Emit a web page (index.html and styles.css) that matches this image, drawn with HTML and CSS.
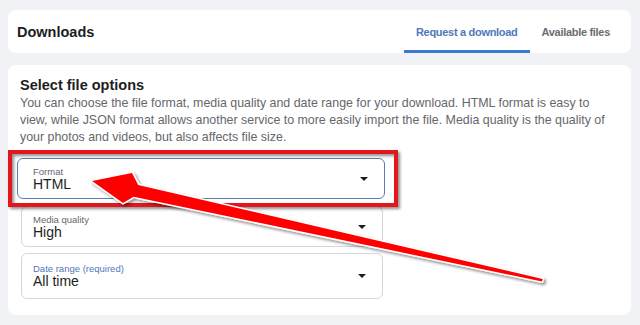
FILE: index.html
```html
<html>
    <head>
        <title>Download your information</title>
        <link rel="stylesheet" href="styles.css">
    </head>
    <body>
        <div class="page">
            <div class="card header">
                <h1 class="title">Downloads</h1>
                <div class="tabs">
                    <a class="tab active">Request a download</a>
                    <a class="tab">Available files</a>
                </div>
            </div>

            <div class="card options">
                <h2 class="sectionTitle">Select file options</h2>
                <p class="desc">You can choose the file format, media quality and date range for your download. HTML format is easy to view, while JSON format allows another service to more easily import the file. Media quality is the quality of your photos and videos, but also affects file size.</p>

                <div class="fields">
                    <div class="field focused">
                        <div>
                            <span class="label">Format</span>
                            <span class="value">HTML</span>
                        </div>
                        <span class="caret"></span>
                    </div>
                    <div class="field">
                        <div>
                            <span class="label">Media quality</span>
                            <span class="value">High</span>
                        </div>
                        <span class="caret"></span>
                    </div>
                    <div class="field tall">
                        <div>
                            <span class="label required">Date range (required)</span>
                            <span class="value">All time</span>
                        </div>
                        <span class="caret"></span>
                    </div>
                </div>
            </div>
        </div>

        <!-- annotation drawn over the page -->
        <svg class="annotation" width="640" height="325" viewBox="0 0 640 325">
            <defs>
                <filter id="shadow" x="-10%" y="-10%" width="120%" height="130%">
                    <feDropShadow dx="2" dy="2" stdDeviation="1.5" flood-color="#000" flood-opacity="0.45"/>
                </filter>
            </defs>
            <rect x="10" y="152" width="386" height="53" fill="none" stroke="#e3141c" stroke-width="4" filter="url(#shadow)"/>
            <polygon points="92,181 132,173 138.2,185 542.6,279 542,281.5 133.6,196.8 123,203"
                     fill="#f00" stroke="#fff" stroke-width="3" stroke-linejoin="round"
                     paint-order="stroke" filter="url(#shadow)"/>
        </svg>
    </body>
</html>
```

FILE: styles.css
```css
body
{
    margin: 0;
    padding: 0;
    background-color: #f0f2f5;
    font-family: "Liberation Sans", Arial, sans-serif;
    color: #1c1e21;
}
.page
{
    padding: 10px 9px 0 8px;
}
.card
{
    background-color: #fff;
    border-radius: 8px;
}
.header
{
    height: 43px;
    display: flex;
    align-items: center;
    justify-content: space-between;
    padding: 0 9px;
}
.title
{
    margin: 0;
    font-size: 14.5px;
    font-weight: bold;
}
.tabs
{
    display: flex;
    align-self: stretch;
}
.tab
{
    display: flex;
    align-items: center;
    padding: 3px 12px 0 12px;
    font-size: 11px;
    letter-spacing: -0.3px;
    font-weight: bold;
    color: #6b6d71;
    border-bottom: 3px solid transparent;
}
.tab.active
{
    color: #4f78b8;
    border-bottom-color: #3b78d0;
}
.options
{
    margin-top: 12px;
    height: 250px;
    box-sizing: border-box;
    padding: 10px 12px;
}
.sectionTitle
{
    margin: 0;
    font-size: 14.5px;
    line-height: 20px;
}
.desc
{
    margin: 0;
    font-size: 12.4px;
    line-height: 17px;
    color: #65676b;
}
.fields
{
    width: 362px;
    margin: 12px 0 0 1px;
    display: flex;
    flex-direction: column;
    gap: 6px;
}
.field
{
    height: 41px;
    box-sizing: border-box;
    border: 1px solid #d4d6da;
    border-radius: 6px;
    display: flex;
    align-items: center;
    justify-content: space-between;
    padding: 0 16px 0 11px;
}
.field.focused
{
    border: 1.5px solid #5a7fac;
    margin: 0 -2px 1px -4px;
    padding-left: 15px;
}
.field.tall
{
    height: 46px;
}
.label
{
    display: block;
    font-size: 9.5px;
    line-height: 11px;
    color: #65676b;
}
.label.required
{
    color: #4f78b8;
}
.value
{
    display: block;
    font-size: 14px;
    line-height: 15px;
}
.caret
{
    width: 0;
    height: 0;
    border-left: 4px solid transparent;
    border-right: 4px solid transparent;
    border-top: 4px solid #1c1e21;
}
.annotation
{
    position: absolute;
    top: 0;
    left: 0;
    pointer-events: none;
}
```
